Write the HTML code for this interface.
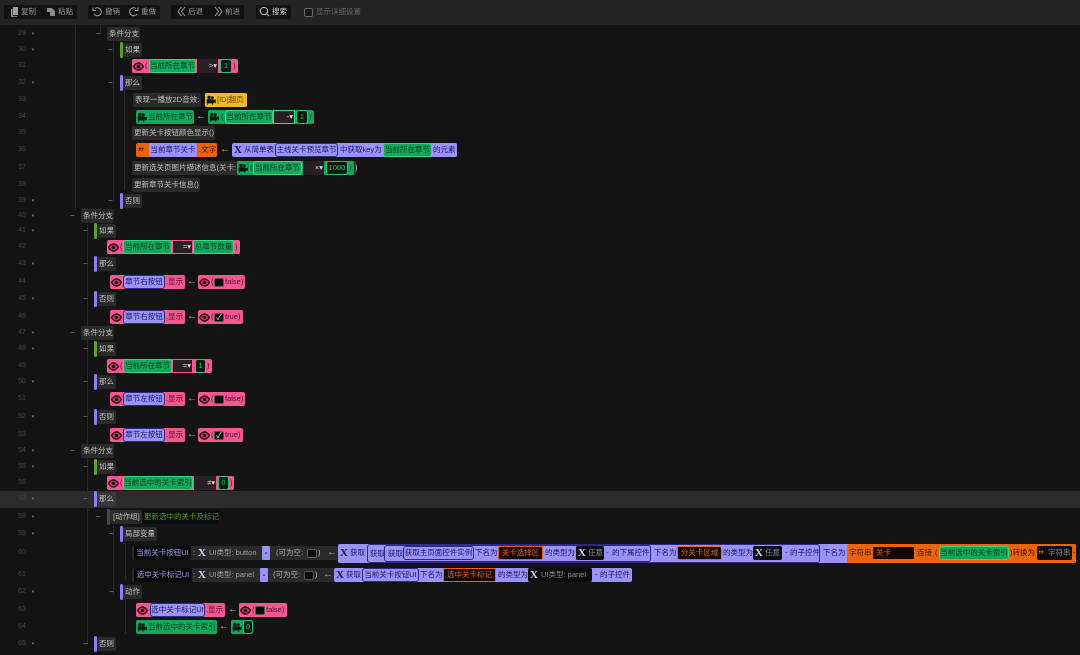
<!DOCTYPE html>
<html lang="zh"><head><meta charset="utf-8"><style>
html,body{margin:0;padding:0;background:#141414}
#w{position:relative;width:1080px;height:655px;overflow:hidden;background:#141414;font:7.5px/14px "Liberation Sans","Noto Sans CJK SC",sans-serif;color:#c0c0c0;filter:blur(.3px)}
#w *{box-sizing:border-box}
.r{position:absolute;left:0;width:1080px;height:0}
.r>*{position:absolute;top:-7px;height:14px;white-space:nowrap;line-height:14px}
.tb{position:absolute;top:0;left:0;width:1080px;height:25px;background:#242424}
.tb div{position:absolute;top:5px;height:14px;background:#121212;border-radius:2px}
.tb span{position:absolute;top:5px;line-height:14px;font-size:7.5px;color:#9a9a9a}
.tb svg{position:absolute;top:6px}
.n{left:15px;width:14px;color:#444;font-size:7px;text-align:center}
.d{left:30px;width:6px;color:#777;font-size:5px;text-align:center}
.m{color:#888;font-size:8px}
.c{background:#2a2a2a;border-radius:2px;padding:0 2px}
.bar{width:3px;border-radius:2px;top:-8px!important;height:16px!important}
.gb{background:#5d9c37}.ub{background:#8a80f2}.xb{background:#474747}
.p{background:#f0588f;border-radius:2px;color:#5d0b2b}
.g{background:#12a85c;border-radius:2px;color:#05401f}
.ig{background:#12a85c;border:1px solid #35d683;border-radius:3px;color:#05401f;line-height:12px!important;text-align:center}
.u{background:#9a93f5;border-radius:2px;color:#1f1a66}
.iu{background:#9a93f5;border:1px solid #2f2a85;border-radius:3px;color:#1f1a66;line-height:12px!important;text-align:center}
.o{background:#e9640c;border-radius:2px;color:#471500}
.y{background:#eeb92b;border-radius:2px;color:#6e4d00}
.k{background:#0b0b0b;border-radius:2px;color:#9c9ce6}
.op{background:#2a1f24;color:#ddd;text-align:right;padding-right:1px;line-height:14px}
.v{background:#061a0e;border:1px solid #1fc270;border-radius:3px;color:#1fc270;line-height:12px!important;text-align:center}
.ob{background:#120700;border:1px solid #e9640c;border-radius:2px;color:#e9640c;line-height:12px!important;text-align:center}
.cb{background:#0b0b0b;border:1px solid #555;border-radius:2px;height:9px!important;width:10px;top:-4.5px!important}
.dd{background:#9a93f5;color:#111;text-align:center;border-radius:1px;font-weight:bold}
.x{font:bold 11px/14px "Liberation Serif",serif;color:#17164a;width:10px;text-align:center}
.xl{color:#cfd0ff}
.ar{color:#b8b8b8;font-size:10px}
.l{position:absolute;width:1px;background:#2a2a2a}
svg.e{width:11px;height:9px;top:-4.5px}
svg.f{width:10px;height:10px;top:-5px}
</style></head><body><div id="w">
<svg width="0" height="0" style="position:absolute"><defs>
<symbol id="eye" viewBox="0 0 11 9"><path d="M.7 4.500C2.500 1.600 4 1 5.500 1s3 .6 4.800 3.500C8.500 7.400 7 8 5.500 8S2.500 7.400.7 4.500Z" fill="#d9477f" stroke="#2e0413" stroke-width="1.500"/><circle cx="5.500" cy="4.500" r="1.900" fill="#2e0413"/></symbol>
<symbol id="cam" viewBox="0 0 10 10"><circle cx="3" cy="2.400" r="1.700" fill="#06160c"/><circle cx="6.400" cy="2.600" r="1.400" fill="#06160c"/><path d="M1 4.500h6.500v3.600H1zM7.500 6l2-1.200v3L7.500 6.800zM2 8.100 1 10M6 8.100 7 10" fill="#06160c" stroke="#06160c" stroke-width=".6"/></symbol>
</defs></svg>

<div class="tb">
<div style="left:4px;width:73px"></div><div style="left:88px;width:72px"></div><div style="left:171px;width:73px"></div><div style="left:256px;width:35px"></div>
<svg style="left:10px" width="9" height="11" viewBox="0 0 9 11"><path d="M3 1h5v8H3zM1 3h1.500v7H7v.8H1z" fill="#a0a0a0"/></svg><span style="left:21px">复制</span>
<svg style="left:46px" width="10" height="11" viewBox="0 0 10 11"><path d="M1 2h5l3 3v5H4V6H1z" fill="#8c8c8c"/></svg><span style="left:58px">粘贴</span>
<svg style="left:92px" width="10" height="11" viewBox="0 0 10 11"><path d="M3 2.500A4 4 0 1 1 2 8M1 1.500v3h3" fill="none" stroke="#a0a0a0"/></svg><span style="left:105px">撤销</span>
<svg style="left:129px" width="10" height="11" viewBox="0 0 10 11"><path d="M7 2.500A4 4 0 1 0 8 8M9 1.500v3H6" fill="none" stroke="#a0a0a0"/></svg><span style="left:141px">重做</span>
<svg style="left:177px" width="9" height="11" viewBox="0 0 9 11"><path d="M4.500 1 1 5.500l3.500 4.500M8 1 4.500 5.500 8 10" fill="none" stroke="#a0a0a0"/></svg><span style="left:188px">后退</span>
<svg style="left:214px" width="9" height="11" viewBox="0 0 9 11"><path d="M1 1l3.500 4.500L1 10M4.500 1 8 5.500 4.500 10" fill="none" stroke="#a0a0a0"/></svg><span style="left:225px">前进</span>
<svg style="left:259px" width="11" height="11" viewBox="0 0 11 11"><circle cx="5" cy="5" r="3.700" fill="none" stroke="#b0b0b0" stroke-width="1.200"/><path d="M7.700 7.700 10 10" stroke="#b0b0b0" stroke-width="1.200"/></svg><span style="left:272px;color:#d4d4d4">搜索</span>
<div style="left:304px;top:8px;width:9px;height:9px;background:#181818;border:1px solid #666"></div><span style="left:316px;color:#666">显示详细设置</span>
</div>

<div style="position:absolute;left:0;top:491px;width:1080px;height:17px;background:#2c2c2c"></div>
<div class="l" style="left:87px;top:224px;height:420px"></div>
<div class="l" style="left:113px;top:42px;height:160px"></div>
<div class="l" style="left:100px;top:25px;height:9px"></div>
<div class="l" style="left:75px;top:25px;height:185px"></div>
<div class="l" style="left:124px;top:90px;height:100px"></div>
<div class="l" style="left:113px;top:525px;height:70px"></div>
<div class="l" style="left:125px;top:540px;height:40px"></div>
<div class="l" style="left:125px;top:598px;height:36px"></div>

<div class="r" style="top:34px"><span class="n">29</span><span class="d">▾</span><span class="m" style="left:96px">−</span><span class="c" style="left:107px;width:33px">条件分支</span></div>
<div class="r" style="top:50px"><span class="n">30</span><span class="d">▾</span><span class="m" style="left:108px">−</span><span class="bar gb" style="left:120px"></span><span class="c" style="left:123px">如果</span></div>
<div class="r" style="top:66px"><span class="n">31</span><span class="p" style="left:132px;width:106px"></span><svg class="e" style="left:133px"><use href="#eye"/></svg><span style="left:145px;color:#5d0b2b">(</span><span class="ig" style="left:149px;width:47px">当前所在章节</span><span class="op" style="left:197px;width:21px">&gt;▾</span><span class="v" style="left:220px;width:12px">1</span><span style="left:233px;color:#5d0b2b">)</span></div>
<div class="r" style="top:83px"><span class="n">32</span><span class="d">▾</span><span class="m" style="left:108px">−</span><span class="bar ub" style="left:120px"></span><span class="c" style="left:123px">那么</span></div>
<div class="r" style="top:100px"><span class="n">33</span><span class="c" style="left:133px;width:68px">表现一播放2D音效:</span><span class="y" style="left:205px;width:42px;padding-left:12px">[ID]翻页</span><svg class="f" style="left:206px"><use href="#cam"/></svg></div>
<div class="r" style="top:117px"><span class="n">34</span><span class="g" style="left:136px;width:58px;padding-left:12px">当前所在章节</span><svg class="f" style="left:137px"><use href="#cam"/></svg><span class="ar" style="left:196px">←</span><span class="g" style="left:208px;width:106px"></span><svg class="f" style="left:209px"><use href="#cam"/></svg><span style="left:221px;color:#05401f">(</span><span class="ig" style="left:225px;width:48px">当前所在章节</span><span class="op" style="left:273px;width:22px;border:1px solid #35d683;line-height:12px">-▾</span><span class="v" style="left:296px;width:12px">1</span><span style="left:309px;color:#05401f">)</span></div>
<div class="r" style="top:133px"><span class="n">35</span><span class="c" style="left:132px;width:83px">更新关卡按钮颜色显示()</span></div>
<div class="r" style="top:150px"><span class="n">36</span><span class="o" style="left:136px;width:81px"></span><span style="left:138px;color:#2a0c00;font:bold 12px/17px 'Liberation Serif',serif">”</span><span class="u" style="left:149px;width:48px;text-align:center">当前章节关卡</span><span style="left:199px;color:#471500">.文字</span><span class="ar" style="left:220px">←</span><span class="u" style="left:232px;width:225px"></span><span class="x" style="left:233px">X</span><span style="left:244px;color:#1f1a66">从简单表</span><span class="iu" style="left:275px;width:63px">主线关卡预览章节</span><span style="left:340px;color:#1f1a66">中获取key为</span><span class="ig" style="left:383px;width:49px">当前所在章节</span><span style="left:433px;color:#1f1a66">的元素</span></div>
<div class="r" style="top:168px"><span class="n">37</span><span class="c" style="left:132px;width:225px"></span><span style="left:134px">更新选关页图片描述信息(关卡:</span><span class="g" style="left:237px;width:117px"></span><svg class="f" style="left:238px"><use href="#cam"/></svg><span style="left:250px;color:#05401f">(</span><span class="ig" style="left:253px;width:49px">当前所在章节</span><span class="op" style="left:303px;width:21px">×▾</span><span class="v" style="left:326px;width:22px">1000</span><span style="left:349px;color:#05401f">)</span><span style="left:355px">)</span></div>
<div class="r" style="top:185px"><span class="n">38</span><span class="c" style="left:132px;width:68px">更新章节关卡信息()</span></div>
<div class="r" style="top:201px"><span class="n">39</span><span class="d">▾</span><span class="m" style="left:108px">−</span><span class="bar ub" style="left:120px"></span><span class="c" style="left:123px">否则</span></div>

<div class="r" style="top:216px"><span class="n">40</span><span class="d">▾</span><span class="m" style="left:70px">−</span><span class="c" style="left:81px;width:33px">条件分支</span></div>
<div class="r" style="top:231px"><span class="n">41</span><span class="d">▾</span><span class="m" style="left:83px">−</span><span class="bar gb" style="left:94px"></span><span class="c" style="left:97px">如果</span></div>
<div class="r" style="top:247px"><span class="n">42</span><span class="p" style="left:107px;width:133px"></span><svg class="e" style="left:108px"><use href="#eye"/></svg><span style="left:120px;color:#5d0b2b">(</span><span class="ig" style="left:123px;width:49px">当前所在章节</span><span class="op" style="left:172px;width:21px;border:1px solid #f0588f;line-height:12px">=▾</span><span class="ig" style="left:193px;width:41px">总章节数量</span><span style="left:235px;color:#5d0b2b">)</span></div>
<div class="r" style="top:264px"><span class="n">43</span><span class="d">▾</span><span class="m" style="left:83px">−</span><span class="bar ub" style="left:94px"></span><span class="c" style="left:97px">那么</span></div>
<div class="r" style="top:282px"><span class="n">44</span><span class="p" style="left:110px;width:75px"></span><svg class="e" style="left:111px"><use href="#eye"/></svg><span class="iu" style="left:123px;width:42px">章节右按钮</span><span style="left:166px;color:#5d0b2b">.显示</span><span class="ar" style="left:187px">←</span><span class="p" style="left:198px;width:47px"></span><svg class="e" style="left:199px"><use href="#eye"/></svg><span style="left:211px;color:#5d0b2b">(</span><span class="cb" style="left:214px"></span><span style="left:225px;color:#5d0b2b">false)</span></div>
<div class="r" style="top:299px"><span class="n">45</span><span class="d">▾</span><span class="m" style="left:83px">−</span><span class="bar ub" style="left:94px"></span><span class="c" style="left:97px">否则</span></div>
<div class="r" style="top:317px"><span class="n">46</span><span class="p" style="left:110px;width:75px"></span><svg class="e" style="left:111px"><use href="#eye"/></svg><span class="iu" style="left:123px;width:42px">章节右按钮</span><span style="left:166px;color:#5d0b2b">.显示</span><span class="ar" style="left:187px">←</span><span class="p" style="left:198px;width:45px"></span><svg class="e" style="left:199px"><use href="#eye"/></svg><span style="left:211px;color:#5d0b2b">(</span><span class="cb" style="left:214px;color:#dfe0ff;font-size:8px;line-height:7px!important;text-align:center">✓</span><span style="left:225px;color:#5d0b2b">true)</span></div>

<div class="r" style="top:333px"><span class="n">47</span><span class="d">▾</span><span class="m" style="left:70px">−</span><span class="c" style="left:81px;width:33px">条件分支</span></div>
<div class="r" style="top:349px"><span class="n">48</span><span class="d">▾</span><span class="m" style="left:83px">−</span><span class="bar gb" style="left:94px"></span><span class="c" style="left:97px">如果</span></div>
<div class="r" style="top:366px"><span class="n">49</span><span class="p" style="left:107px;width:105px"></span><svg class="e" style="left:108px"><use href="#eye"/></svg><span style="left:120px;color:#5d0b2b">(</span><span class="ig" style="left:123px;width:49px">当前所在章节</span><span class="op" style="left:172px;width:21px;border:1px solid #f0588f;line-height:12px">=▾</span><span class="v" style="left:195px;width:11px">1</span><span style="left:207px;color:#5d0b2b">)</span></div>
<div class="r" style="top:382px"><span class="n">50</span><span class="d">▾</span><span class="m" style="left:83px">−</span><span class="bar ub" style="left:94px"></span><span class="c" style="left:97px">那么</span></div>
<div class="r" style="top:399px"><span class="n">51</span><span class="p" style="left:110px;width:75px"></span><svg class="e" style="left:111px"><use href="#eye"/></svg><span class="iu" style="left:123px;width:42px">章节左按钮</span><span style="left:166px;color:#5d0b2b">.显示</span><span class="ar" style="left:187px">←</span><span class="p" style="left:198px;width:47px"></span><svg class="e" style="left:199px"><use href="#eye"/></svg><span style="left:211px;color:#5d0b2b">(</span><span class="cb" style="left:214px"></span><span style="left:225px;color:#5d0b2b">false)</span></div>
<div class="r" style="top:417px"><span class="n">52</span><span class="d">▾</span><span class="m" style="left:83px">−</span><span class="bar ub" style="left:94px"></span><span class="c" style="left:97px">否则</span></div>
<div class="r" style="top:435px"><span class="n">53</span><span class="p" style="left:110px;width:75px"></span><svg class="e" style="left:111px"><use href="#eye"/></svg><span class="iu" style="left:123px;width:42px">章节左按钮</span><span style="left:166px;color:#5d0b2b">.显示</span><span class="ar" style="left:187px">←</span><span class="p" style="left:198px;width:45px"></span><svg class="e" style="left:199px"><use href="#eye"/></svg><span style="left:211px;color:#5d0b2b">(</span><span class="cb" style="left:214px;color:#dfe0ff;font-size:8px;line-height:7px!important;text-align:center">✓</span><span style="left:225px;color:#5d0b2b">true)</span></div>

<div class="r" style="top:451px"><span class="n">54</span><span class="d">▾</span><span class="m" style="left:70px">−</span><span class="c" style="left:81px;width:33px">条件分支</span></div>
<div class="r" style="top:467px"><span class="n">55</span><span class="d">▾</span><span class="m" style="left:83px">−</span><span class="bar gb" style="left:94px"></span><span class="c" style="left:97px">如果</span></div>
<div class="r" style="top:483px"><span class="n">56</span><span class="p" style="left:107px;width:127px"></span><svg class="e" style="left:108px"><use href="#eye"/></svg><span style="left:120px;color:#5d0b2b">(</span><span class="ig" style="left:123px;width:70px">当前选中的关卡索引</span><span class="op" style="left:194px;width:22px">≠▾</span><span class="v" style="left:218px;width:11px">0</span><span style="left:230px;color:#5d0b2b">)</span></div>
<div class="r" style="top:499px"><span class="n">57</span><span class="d">▾</span><span class="m" style="left:83px">−</span><span class="bar ub" style="left:94px"></span><span class="c" style="left:97px;background:#383838">那么</span></div>
<div class="r" style="top:517px"><span class="n">58</span><span class="d">▾</span><span class="m" style="left:96px">−</span><span class="bar xb" style="left:107px"></span><span class="c" style="left:110px;width:32px;padding-left:3px">[动作组]</span><span style="left:142px;width:77px;background:#0c0c0c;color:#4d9a2f;padding-left:2px">更新选中的关卡及标记</span></div>
<div class="r" style="top:534px"><span class="n">59</span><span class="d">▾</span><span class="m" style="left:109px">−</span><span class="bar ub" style="left:120px"></span><span class="c" style="left:123px;width:34px">局部变量</span></div>

<div class="r" style="top:553px"><span class="n">60</span><span class="c" style="left:132px;width:206px"></span><span class="k" style="left:134px;width:57px;text-align:center">当前关卡按钮UI</span><span style="left:193px">:</span><span class="x xl" style="left:197px">X</span><span style="left:209px;color:#a0a0a0">UI类型: button</span><span class="dd" style="left:262px;width:8px">-</span><span style="left:276px;color:#aaa">(可为空:</span><span class="cb" style="left:307px"></span><span style="left:318px">)</span><span class="ar" style="left:327px">←</span>
<span class="u" style="left:338px;width:738px;top:-9px;height:19px"></span><span class="x" style="left:339px">X</span><span style="left:350px;color:#1f1a66">获取</span><span class="iu" style="left:367px;width:453px;top:-9px;height:19px;line-height:17px!important;text-align:left;padding-left:2px">获取</span><span class="iu" style="left:384px;width:267px;top:-8px;height:17px;line-height:15px!important;text-align:left;padding-left:3px">获取</span><span class="iu" style="left:403px;width:71px">获取主页面控件实例</span><span style="left:475px;color:#1f1a66">下名为</span><span class="ob" style="left:498px;width:45px">关卡选择区</span><span style="left:545px;color:#1f1a66">的类型为</span><span class="k" style="left:576px;width:28px;padding-left:12px;color:#8a8a9a">任意</span><span class="x xl" style="left:577px">X</span><span style="left:606px;color:#1f1a66">-</span><span style="left:612px;color:#1f1a66">的下属控件</span><span style="left:654px;color:#1f1a66">下名为</span><span class="ob" style="left:677px;width:45px">分关卡区域</span><span style="left:723px;color:#1f1a66">的类型为</span><span class="k" style="left:753px;width:29px;padding-left:12px;color:#8a8a9a">任意</span><span class="x xl" style="left:754px">X</span><span style="left:785px;color:#1f1a66">-</span><span style="left:790px;color:#1f1a66">的子控件</span><span style="left:823px;color:#1f1a66">下名为</span>
<span class="o" style="left:847px;width:229px;top:-9px;height:19px"></span><span style="left:849px;color:#471500">字符串</span><span class="ob" style="left:872px;width:43px;text-align:left;padding-left:3px">关卡</span><span style="left:917px;color:#471500">连接</span><span style="left:935px;color:#471500">(</span><span class="ig" style="left:939px;width:70px">当前选中的关卡索引</span><span style="left:1010px;color:#471500">)转换为</span><span class="k" style="left:1037px;width:35px;padding-left:11px;color:#8a8a8a">字符串</span><span style="left:1038px;color:#e9640c;font:bold 12px/17px 'Liberation Serif',serif">”</span><span style="left:1073px;color:#471500">-</span></div>

<div class="r" style="top:575px"><span class="n">61</span><span class="c" style="left:132px;width:202px"></span><span class="k" style="left:134px;width:58px;text-align:center">选中关卡标记UI</span><span style="left:193px">:</span><span class="x xl" style="left:197px">X</span><span style="left:209px;color:#a0a0a0">UI类型: panel</span><span class="dd" style="left:260px;width:8px">-</span><span style="left:273px;color:#aaa">(可为空:</span><span class="cb" style="left:304px"></span><span style="left:315px">)</span><span class="ar" style="left:323px">←</span>
<span class="u" style="left:334px;width:298px"></span><span class="x" style="left:335px">X</span><span style="left:346px;color:#1f1a66">获取</span><span class="iu" style="left:362px;width:57px">当前关卡按钮UI</span><span style="left:420px;color:#1f1a66">下名为</span><span class="ob" style="left:443px;width:53px">选中关卡标记</span><span style="left:498px;color:#1f1a66">的类型为</span><span class="k" style="left:528px;width:64px;padding-left:13px;color:#8a8a9a">UI类型: panel</span><span class="x xl" style="left:529px">X</span><span style="left:595px;color:#1f1a66">-</span><span style="left:600px;color:#1f1a66">的子控件</span></div>

<div class="r" style="top:592px"><span class="n">62</span><span class="d">▾</span><span class="m" style="left:109px">−</span><span class="bar ub" style="left:120px"></span><span class="c" style="left:123px">动作</span></div>
<div class="r" style="top:610px"><span class="n">63</span><span class="p" style="left:136px;width:89px"></span><svg class="e" style="left:137px"><use href="#eye"/></svg><span class="iu" style="left:150px;width:55px">选中关卡标记UI</span><span style="left:206px;color:#5d0b2b">.显示</span><span class="ar" style="left:228px">←</span><span class="p" style="left:239px;width:48px"></span><svg class="e" style="left:240px"><use href="#eye"/></svg><span style="left:252px;color:#5d0b2b">(</span><span class="cb" style="left:255px"></span><span style="left:266px;color:#5d0b2b">false)</span></div>
<div class="r" style="top:627px"><span class="n">64</span><span class="g" style="left:136px;width:81px;padding-left:12px">当前选中的关卡索引</span><svg class="f" style="left:137px"><use href="#cam"/></svg><span class="ar" style="left:219px">←</span><span class="g" style="left:231px;width:22px"></span><svg class="f" style="left:232px"><use href="#cam"/></svg><span class="v" style="left:243px;width:10px">0</span></div>
<div class="r" style="top:644px"><span class="n">65</span><span class="d">▾</span><span class="m" style="left:83px">−</span><span class="bar ub" style="left:94px"></span><span class="c" style="left:97px">否则</span></div>
</div></body></html>
